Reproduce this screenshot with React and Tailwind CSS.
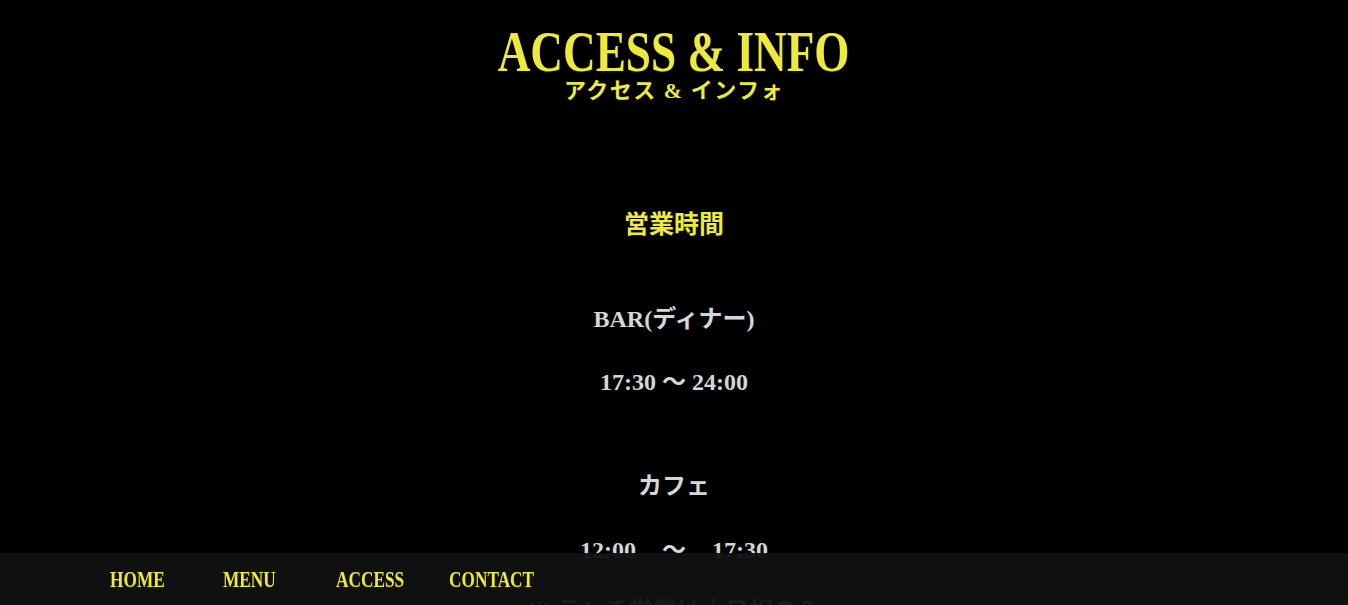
import React from 'react';

const serif = "font-['Liberation_Serif','Noto_Sans_CJK_JP',serif]";

const navItems = ['HOME', 'MENU', 'ACCESS', 'CONTACT'];

const Footer = () => (
  <nav className="fixed bottom-0 left-0 right-0 h-[52px] bg-[#111111]/95 flex items-center pl-[110px] text-left">
    {navItems.map((item) => (
      <a key={item} href="#" className="block w-[113px] leading-none">
        <span className={`${serif} inline-block origin-left scale-x-[0.72] text-[24px] font-bold text-[#eeea3a]`}>
          {item}
        </span>
      </a>
    ))}
  </nav>
);

const App = () => {
  return (
    <div className={`${serif} min-h-[605px] bg-black flex flex-col items-center text-center pb-[80px]`}>
      <h1 className="pt-[24px] text-[58px] leading-[56px] font-bold text-[#eeea3a]">
        <span className="inline-block scale-x-[0.78]">ACCESS &amp; INFO</span>
      </h1>
      <p className="text-[22px] leading-none font-bold tracking-[1.5px] text-[#eeea3a]">
        アクセス &amp; インフォ
      </p>

      <h2 className="mt-[110px] text-[25px] leading-none font-bold text-[#eeea3a]">営業時間</h2>

      <div className="text-[24px] leading-none font-bold text-[#d6d6d6]">
        <p className="mt-[70px]">BAR(ディナー)</p>
        <p className="mt-[39px]">17:30 〜 24:00</p>
        <p className="mt-[80px]">カフェ</p>
        <p className="mt-[40px] flex justify-center gap-[26px]">
          <span>12:00</span>
          <span>〜</span>
          <span>17:30</span>
        </p>
        <p className="mt-[37px]">※ ランチ営業は土日祝のみ</p>
      </div>

      <Footer />
    </div>
  );
};

export default App;
